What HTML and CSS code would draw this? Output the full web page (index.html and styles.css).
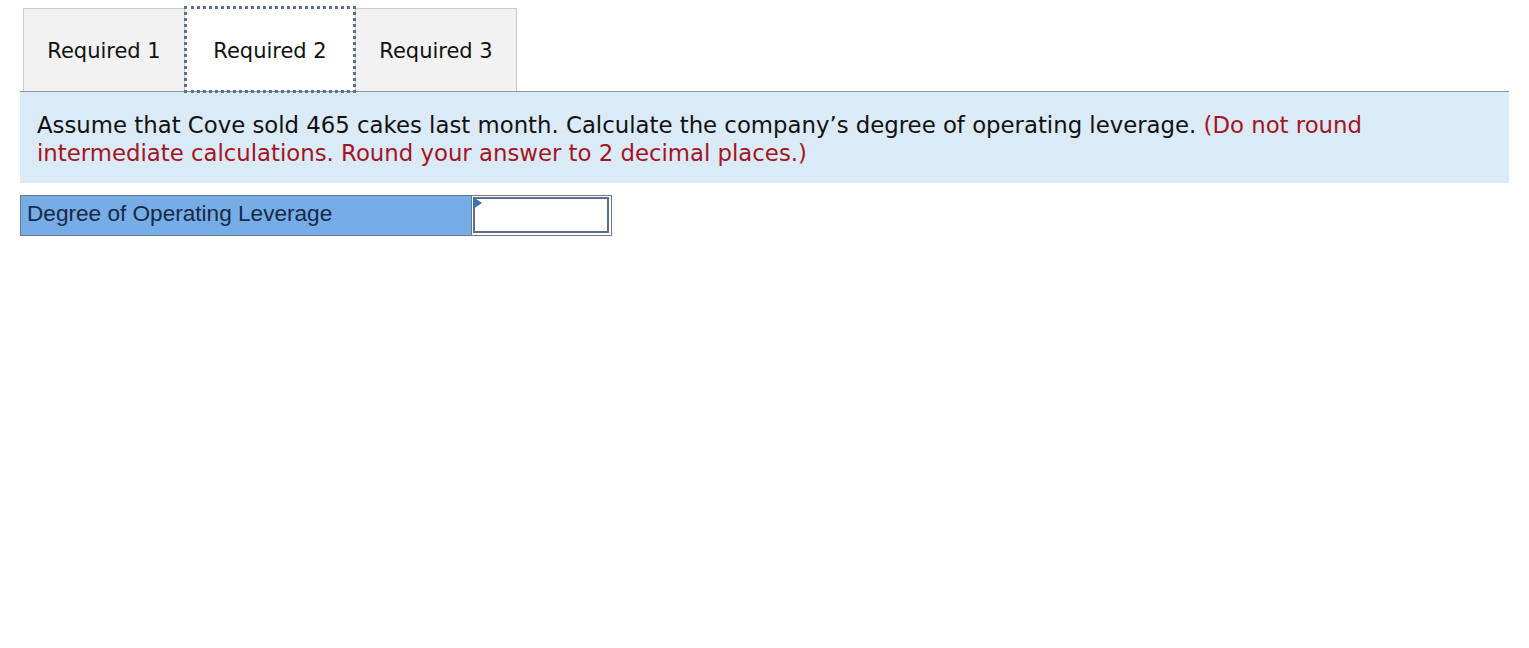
FILE: index.html
```html
<!DOCTYPE html>
<html>
<head>
<meta charset="utf-8">
<link rel="stylesheet" href="styles.css">
</head>
<body>
<div class="page">
  <div class="tabs">
    <div class="tab">Required 1</div>
    <div class="tab active">Required 2</div>
    <div class="tab">Required 3</div>
  </div>
  <div class="question">
    Assume that Cove sold 465 cakes last month. Calculate the company’s degree of operating leverage. <span class="note">(Do not round intermediate calculations. Round your answer to 2 decimal places.)</span>
  </div>
  <div class="answer">
    <div class="label">Degree of Operating Leverage</div>
    <div class="input-cell"><span class="marker"></span><div class="input"></div></div>
  </div>
</div>
</body>
</html>
```
FILE: styles.css
```css
html, body {
  margin: 0;
  padding: 0;
  background: #fff;
}
.page {
  padding: 8px 20px 0 20px;
  width: 1489px;
}
.tabs {
  display: flex;
  margin-left: 3px;
  gap: 1px;
  height: 83px;
}
.tab {
  width: 162px;
  box-sizing: border-box;
  border: 1px solid #c9c9c9;
  border-bottom: none;
  background: #f2f2f2;
  display: flex;
  align-items: center;
  justify-content: center;
  font-family: "DejaVu Sans", Verdana, sans-serif;
  font-size: 21px;
  color: #111;
  padding-top: 2px;
}
.tab.active {
  background: #fff;
  width: 168px;
  border: none;
  outline: 3px dotted #5b708c;
  outline-offset: -1px;
  position: relative;
  z-index: 1;
  padding-top: 3px;
}
.question {
  border-top: 1px solid #8a98a6;
  background: #dbeaf7;
  padding: 19px 17px 16px 17px;
  font-family: "DejaVu Sans", Verdana, sans-serif;
  font-size: 22.8px;
  line-height: 28px;
  color: #111;
}
.note {
  color: #a3151f;
}
.answer {
  display: flex;
  margin-top: 12px;
  height: 41px;
  width: 592px;
}
.label {
  width: 451px;
  box-sizing: border-box;
  background: #77ace6;
  border: 1px solid #667a8f;
  border-right: none;
  font-family: "Liberation Sans", Arial, sans-serif;
  font-size: 22.6px;
  color: #152a47;
  padding: 5px 0 0 6px;
}
.input-cell {
  position: relative;
  width: 141px;
  box-sizing: border-box;
  border: 1px solid #667a8f;
  padding: 1px 2px 2px 1px;
}
.input {
  height: 100%;
  box-sizing: border-box;
  border: 2px solid #5d6f87;
  background: #fff;
}
.marker {
  position: absolute;
  left: 1px;
  top: 1px;
  width: 0;
  height: 0;
  border-top: 6px solid transparent;
  border-bottom: 6px solid transparent;
  border-left: 9px solid #3a6fb0;
}
```
